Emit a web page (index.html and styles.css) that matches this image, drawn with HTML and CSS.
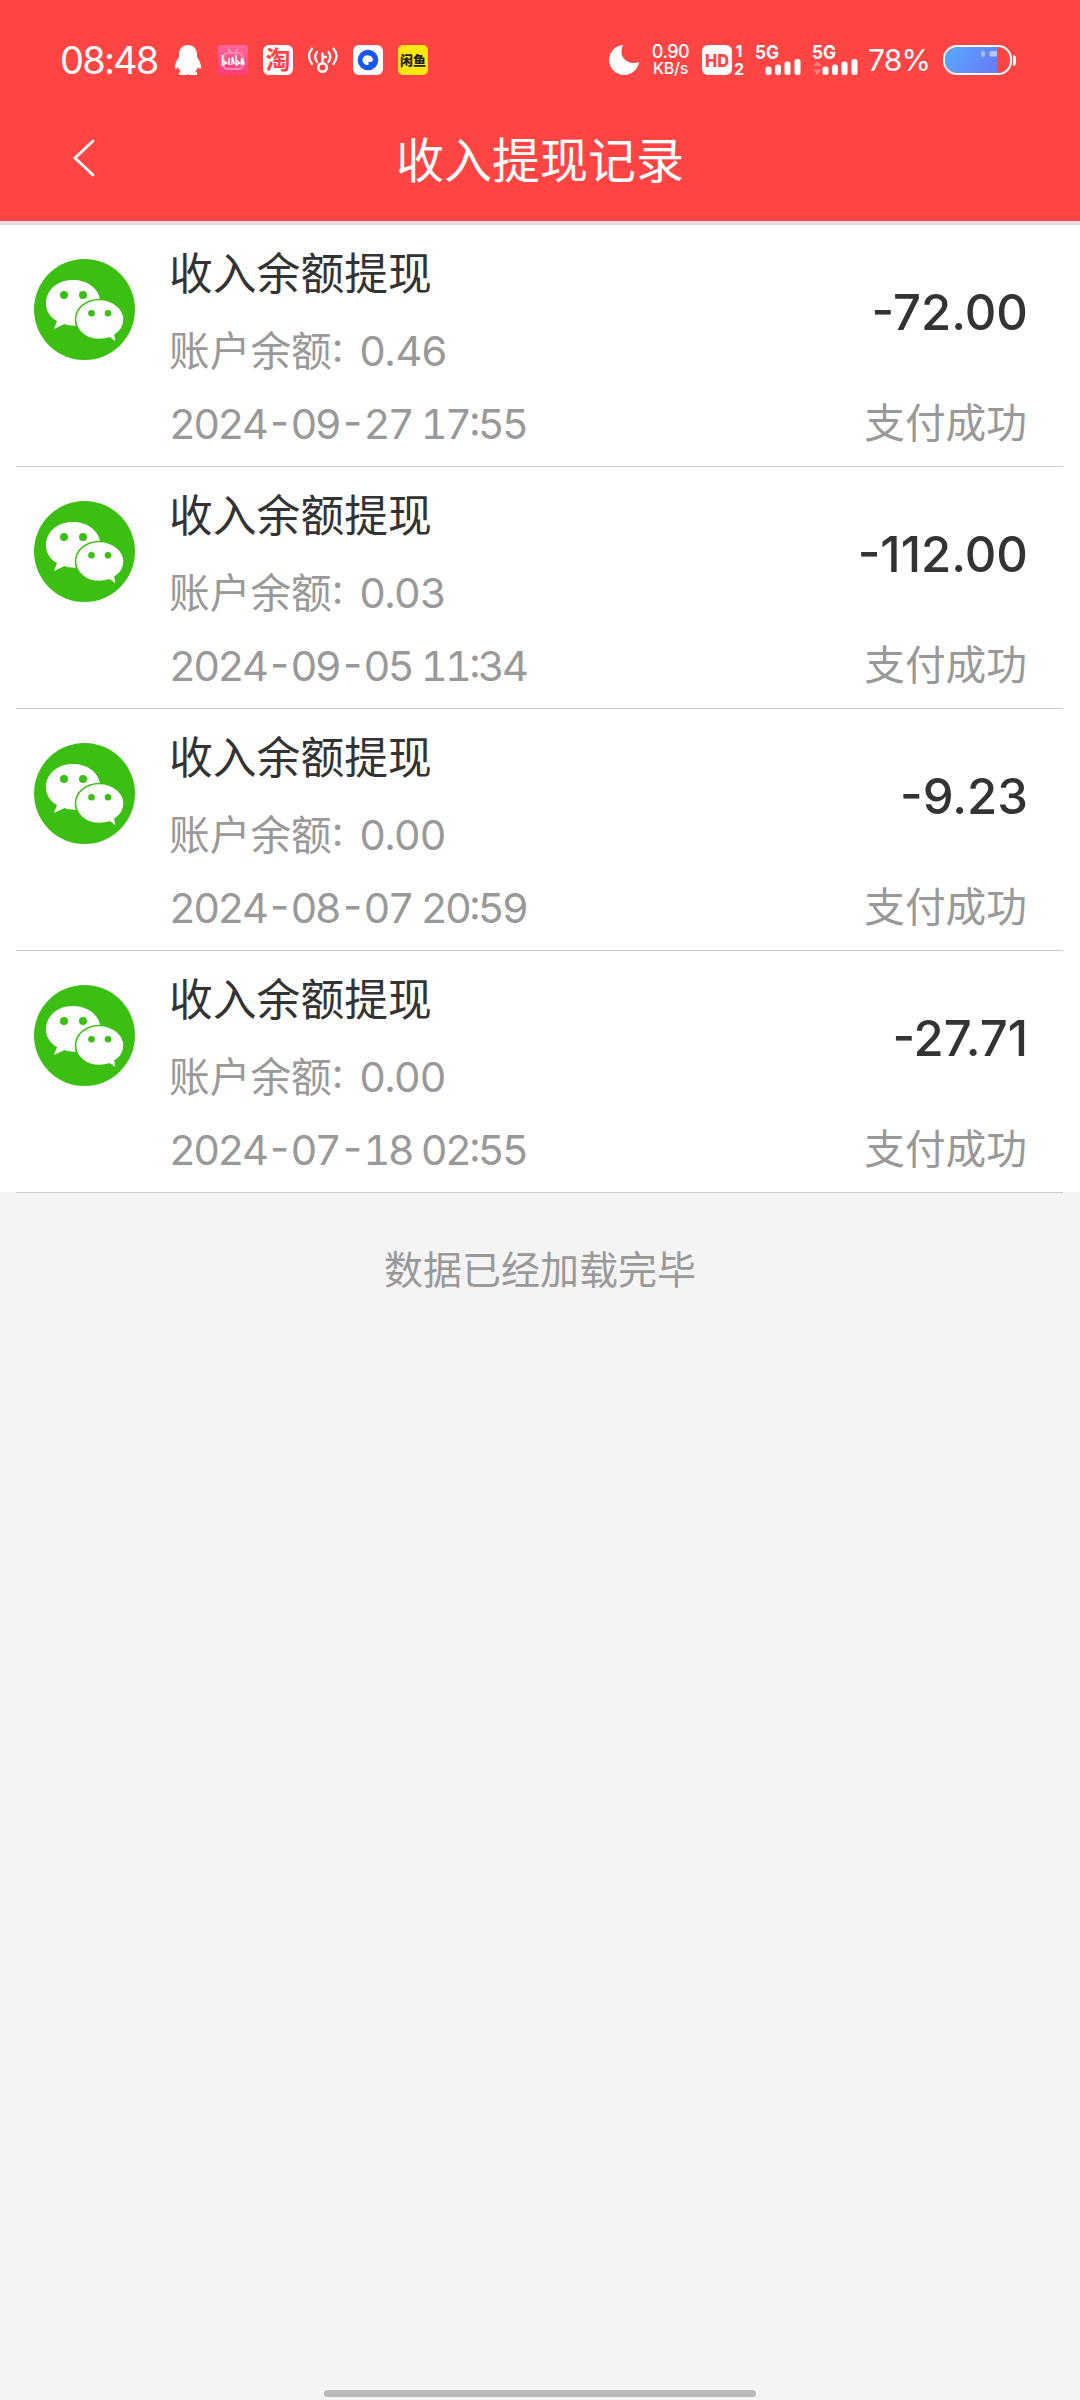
FILE: index.html
```html
<!DOCTYPE html>
<html lang="zh-CN">
  <head>
    <meta charset="UTF-8" />
    <meta name="viewport" content="width=device-width, initial-scale=1.0" />
    <title>收入提现记录</title>
    <link rel="stylesheet" href="styles.css">
  </head>
  <body>
    <!-- shared wechat logo -->
    <svg class="sprite" width="0" height="0">
      <symbol id="wechat" viewBox="0 0 101 101">
        <circle cx="50.5" cy="50.5" r="50.5" fill="#3cbf13" />
        <path fill="#fff" d="M39 21C23 21 12 31 12 44.500C12 52 16 58 23 62L20 70L30.500 65C34 66.500 39 67 44 66.500L66 40C64 29 53 21 39 21Z" />
        <path fill="#fff" stroke="#3cbf13" stroke-width="1.600" d="M65.500 40.500C51.500 40.500 41.500 49.500 41.500 60.500C41.500 72 52 80.500 65.500 80.500C69 80.500 72.500 80 75.500 79L82.500 84L81 76C86.500 72.500 90 67 90 60.500C90 49.500 79 40.500 65.500 40.500Z" />
        <g fill="#3cbf13">
          <circle cx="30" cy="36" r="4" />
          <circle cx="49" cy="36" r="4" />
          <circle cx="57.500" cy="54.300" r="3.300" />
          <circle cx="74" cy="54.300" r="3.300" />
        </g>
      </symbol>
    </svg>

    <header class="header">
      <div class="status-bar">
        <span class="clock">08:48</span>
        <div class="app-icons">
          <svg width="30" height="30" viewBox="0 0 30 30">
            <path fill="#fff" d="M15 0C9.500 0 6 4 6 9.500V12C4 15 2 18.500 2 22C2 24.500 3.500 24.500 5 22C5.500 23.800 6.500 25.300 7.800 26.500C6 27.200 5.500 28 6 30H14L15 29L16 30H24C24.500 28 24 27.200 22.200 26.500C23.500 25.300 24.500 23.800 25 22C26.500 24.500 28 24.500 28 22C28 18.500 26 15 24 12V9.500C24 4 20.500 0 15 0Z" />
          </svg>
          <svg width="30" height="30" viewBox="0 0 30 30">
            <defs>
              <linearGradient id="pink" x1="0" y1="0" x2="0" y2="1">
                <stop offset="0" stop-color="#ff6699" />
                <stop offset="1" stop-color="#ff3d78" />
              </linearGradient>
            </defs>
            <rect width="30" height="30" rx="2" fill="url(#pink)" />
            <path d="M10 4L13 7M20 4L17 7" stroke="#ff8db2" stroke-width="2" fill="none" />
            <rect x="5.500" y="8" width="19" height="16" rx="4" stroke="#ff8db2" stroke-width="2" fill="none" />
            <path d="M4.500 10V20L8.500 18L5 15.500M11 13V20M13.500 20L14.500 12L16 19M18 10V20L21.500 18L18.500 15.500M23.500 13V20L25 14L26 20" stroke="#fff" stroke-width="1.600" fill="none" />
          </svg>
          <svg width="30" height="30" viewBox="0 0 30 30">
            <rect width="30" height="30" rx="6" fill="#fff" />
            <text class="tao" x="15" y="23.500" text-anchor="middle">淘</text>
          </svg>
          <svg width="30" height="30" viewBox="0 0 30 30" fill="none" stroke="#fff" stroke-width="2.200" stroke-linecap="round">
            <circle cx="14.500" cy="22.500" r="4.200" stroke-width="2.600" />
            <path d="M14.500 18V8.500M15 12H18" stroke-width="2.400" />
            <path d="M9 7Q5.500 11.500 9 17M4 3.500Q-2 11 4 19M20.500 7Q24 11.500 20.500 17M25.500 3.500Q31.500 11 25.500 19" />
          </svg>
          <svg width="30" height="30" viewBox="0 0 30 30">
            <rect width="30" height="30" rx="6" fill="#fff" />
            <circle cx="15" cy="15" r="10.300" fill="#1755f5" />
            <path fill="#fff" d="M15.500 10.500A4.800 4.800 0 1 0 15.500 19.800V17H18L20 15.500A5 5 0 0 0 15.500 10.500Z" />
          </svg>
          <svg width="30" height="30" viewBox="0 0 30 30">
            <rect width="30" height="30" rx="5" fill="#ffe60f" />
            <text class="xianyu" x="15" y="20" text-anchor="middle">闲鱼</text>
          </svg>
        </div>

        <svg class="moon" width="30" height="30" viewBox="0 0 30 30">
          <path fill="#fff" d="M14 0A15 15 0 1 0 30 17C22 20.500 11.500 15 12.500 5.500C12.700 3.500 13.200 1.700 14 0Z" />
        </svg>
        <div class="speed">
          <span>0.90</span>
          <span class="unit">KB/s</span>
        </div>
        <svg class="hd" width="43" height="30" viewBox="0 0 43 30">
          <rect width="30" height="30" rx="6" fill="#fff" />
          <text class="hd-text" x="15" y="21.500" text-anchor="middle" textLength="24" lengthAdjust="spacingAndGlyphs">HD</text>
          <text class="sim" x="37" y="12" text-anchor="middle">1</text>
          <text class="sim" x="37" y="29.500" text-anchor="middle">2</text>
        </svg>
        <svg class="signal" width="45" height="30" viewBox="0 0 45 30">
          <text class="net" x="-1" y="14" textLength="24" lengthAdjust="spacingAndGlyphs">5G</text>
          <g fill="#fff">
            <rect x="9.500" y="21.500" width="6" height="8.500" rx="2.500" />
            <rect x="19" y="19.500" width="6" height="10.500" rx="2.500" />
            <rect x="28.500" y="16.500" width="6" height="13.500" rx="2.500" />
            <rect x="38.500" y="14" width="6" height="16" rx="2.500" />
          </g>
        </svg>
        <svg class="signal second" width="45" height="30" viewBox="0 0 45 30">
          <text class="net" x="-1" y="14" textLength="24" lengthAdjust="spacingAndGlyphs">5G</text>
          <path fill="#ff8080" d="M0 21L4 16L8.500 21ZM0 24.500H8.500L4 30Z" />
          <g fill="#fff">
            <rect x="9.500" y="21.500" width="6" height="8.500" rx="2.500" />
            <rect x="19" y="19.500" width="6" height="10.500" rx="2.500" />
            <rect x="28.500" y="16.500" width="6" height="13.500" rx="2.500" />
            <rect x="38.500" y="14" width="6" height="16" rx="2.500" />
          </g>
        </svg>
        <span class="percent">78%</span>
        <svg class="battery" width="73" height="30" viewBox="0 0 73 30">
          <defs>
            <linearGradient id="charge" x1="0" y1="0" x2="1" y2="0.400">
              <stop offset="0" stop-color="#55adff" />
              <stop offset="1" stop-color="#6580f6" />
            </linearGradient>
          </defs>
          <path fill="url(#charge)" d="M54 2V28H15A13 13 0 0 1 15 2Z" />
          <rect x="38" y="6" width="4" height="6" rx="2" fill="#a6bcff" />
          <path d="M54 6H48A3 3 0 0 0 48 11.500H54Z" fill="#b6c4ff" />
          <rect x="1" y="1" width="67" height="28" rx="13" fill="none" stroke="#fff" stroke-width="2" />
          <path d="M70 10Q73 10.500 73 13V18Q73 20.500 70 21Z" fill="#fff" />
        </svg>
      </div>

      <div class="nav-bar">
        <svg class="back" width="22" height="38" viewBox="0 0 22 38">
          <path d="M20 2L2 19L20 36" fill="none" stroke="#fff" stroke-width="2.800" stroke-linecap="round" />
        </svg>
        <h1 class="page-title">收入提现记录</h1>
      </div>
    </header>

    <main class="records">
      <div class="record">
        <svg class="logo"><use href="#wechat" /></svg>
        <div class="info">
          <p class="name">收入余额提现</p>
          <p class="balance"><span>账户余额<span class="colon">:</span></span><span class="num">0.46</span></p>
          <p class="date">2024-09-27 17:55</p>
        </div>
        <div class="result">
          <p class="amount">-72.00</p>
          <p class="state">支付成功</p>
        </div>
      </div>
      <div class="record">
        <svg class="logo"><use href="#wechat" /></svg>
        <div class="info">
          <p class="name">收入余额提现</p>
          <p class="balance"><span>账户余额<span class="colon">:</span></span><span class="num">0.03</span></p>
          <p class="date">2024-09-05 11:34</p>
        </div>
        <div class="result">
          <p class="amount">-112.00</p>
          <p class="state">支付成功</p>
        </div>
      </div>
      <div class="record">
        <svg class="logo"><use href="#wechat" /></svg>
        <div class="info">
          <p class="name">收入余额提现</p>
          <p class="balance"><span>账户余额<span class="colon">:</span></span><span class="num">0.00</span></p>
          <p class="date">2024-08-07 20:59</p>
        </div>
        <div class="result">
          <p class="amount">-9.23</p>
          <p class="state">支付成功</p>
        </div>
      </div>
      <div class="record">
        <svg class="logo"><use href="#wechat" /></svg>
        <div class="info">
          <p class="name">收入余额提现</p>
          <p class="balance"><span>账户余额<span class="colon">:</span></span><span class="num">0.00</span></p>
          <p class="date">2024-07-18 02:55</p>
        </div>
        <div class="result">
          <p class="amount">-27.71</p>
          <p class="state">支付成功</p>
        </div>
      </div>
    </main>

    <p class="loaded">数据已经加载完毕</p>
    <div class="home-bar"></div>
  </body>
</html>
```

FILE: styles.css
```css
:root {
  --red: #ff4444;
  --text: #333;
  --muted: #999;
  --line: #ccc;
  --page: #f4f4f4;
  --digits: Inter, "Noto Sans CJK SC", sans-serif;
}

* {
  box-sizing: border-box;
}

body {
  display: flex;
  flex-direction: column;
  height: 2400px;
  margin: 0;
  font-family: "Noto Sans CJK SC", sans-serif;
  color: var(--text);
  background-color: var(--page);
}

p,
h1 {
  margin: 0;
  font-weight: normal;
  white-space: nowrap;
}

svg {
  display: block;
  flex: none;
  overflow: visible;
}

.sprite {
  position: absolute;
}

.header {
  height: 225px;
  color: #fff;
  background-color: var(--red);
  border-bottom: 4px solid #e2dcdc;
}

/* status bar */
.status-bar {
  display: flex;
  align-items: center;
  height: 120px;
  padding: 0 64px 0 60px;
  font-family: var(--digits);
}

.clock {
  width: 113px;
  font-size: 38px;
  letter-spacing: -1.8px;
}

.app-icons {
  display: flex;
  gap: 15px;
}

.tao {
  font: 700 25px "Noto Sans CJK SC", sans-serif;
  fill: #ff4444;
}

.xianyu {
  font: 900 13px "Noto Sans CJK SC", sans-serif;
  fill: #222;
}

.moon {
  margin-left: auto;
}

.speed {
  display: flex;
  flex-direction: column;
  align-items: center;
  width: 37px;
  margin-left: 13px;
  font-size: 18px;
  font-weight: 500;
  line-height: 17px;
  letter-spacing: -0.5px;
}

.speed .unit {
  font-size: 16px;
  letter-spacing: -0.2px;
}

.hd {
  margin-left: 13px;
}

.hd-text {
  font: 800 18px Inter, sans-serif;
  fill: var(--red);
}

.sim {
  font: 700 16px Inter, sans-serif;
  fill: #fff;
}

.signal {
  margin-left: 11px;
}

.signal.second {
  margin-left: 12px;
}

.net {
  font: 700 19px Inter, sans-serif;
  fill: #fff;
}

.percent {
  width: 75px;
  margin-left: 10px;
  font-size: 30px;
  letter-spacing: -0.8px;
}

/* nav bar */
.nav-bar {
  display: grid;
  grid-template-columns: 74px 1fr 74px;
  align-items: center;
  height: 76px;
}

.back {
  grid-column: 1;
  margin-left: 73px;
}

.page-title {
  grid-column: 2;
  padding-bottom: 2px;
  font-size: 48px;
  line-height: 74px;
  text-align: center;
}

/* list */
.records {
  padding: 0 17px 0 16px;
  background: linear-gradient(#fff, #fff) no-repeat 0 0 / 100% calc(100% - 1px);
}

.record {
  display: flex;
  height: 242px;
  padding: 10px 36px 0 18px;
  border-bottom: 1px solid var(--line);
}

.logo {
  width: 101px;
  height: 101px;
  margin: 24px 34px 0 0;
}

.info {
  flex: 1;
}

.name {
  font-size: 43.8px;
  line-height: 72px;
}

.balance {
  display: flex;
  gap: 16px;
  font-size: 40.7px;
  line-height: 84px;
  color: var(--muted);
}

.colon {
  font-family: var(--digits);
  font-feature-settings: "case";
}

.num,
.date {
  font-family: var(--digits);
  font-size: 41.5px;
}

.num {
  padding-top: 2px;
  letter-spacing: -0.6px;
}

.date {
  line-height: 60px;
  font-feature-settings: "tnum", "case";
  letter-spacing: -2.6px;
  color: var(--muted);
}

.result {
  text-align: right;
}

.amount {
  margin-right: -1px;
  font-family: var(--digits);
  font-size: 49px;
  font-weight: 500;
  font-feature-settings: "case";
  line-height: 156px;
}

.state {
  margin-top: -6px;
  font-size: 40.7px;
  line-height: 72px;
  color: var(--muted);
}

.loaded {
  margin-top: 38px;
  font-size: 39px;
  line-height: 72px;
  text-align: center;
  color: var(--muted);
}

.home-bar {
  width: 432px;
  height: 7px;
  margin: auto auto 3px;
  border-radius: 4px;
  background-color: #bbb;
}
```
